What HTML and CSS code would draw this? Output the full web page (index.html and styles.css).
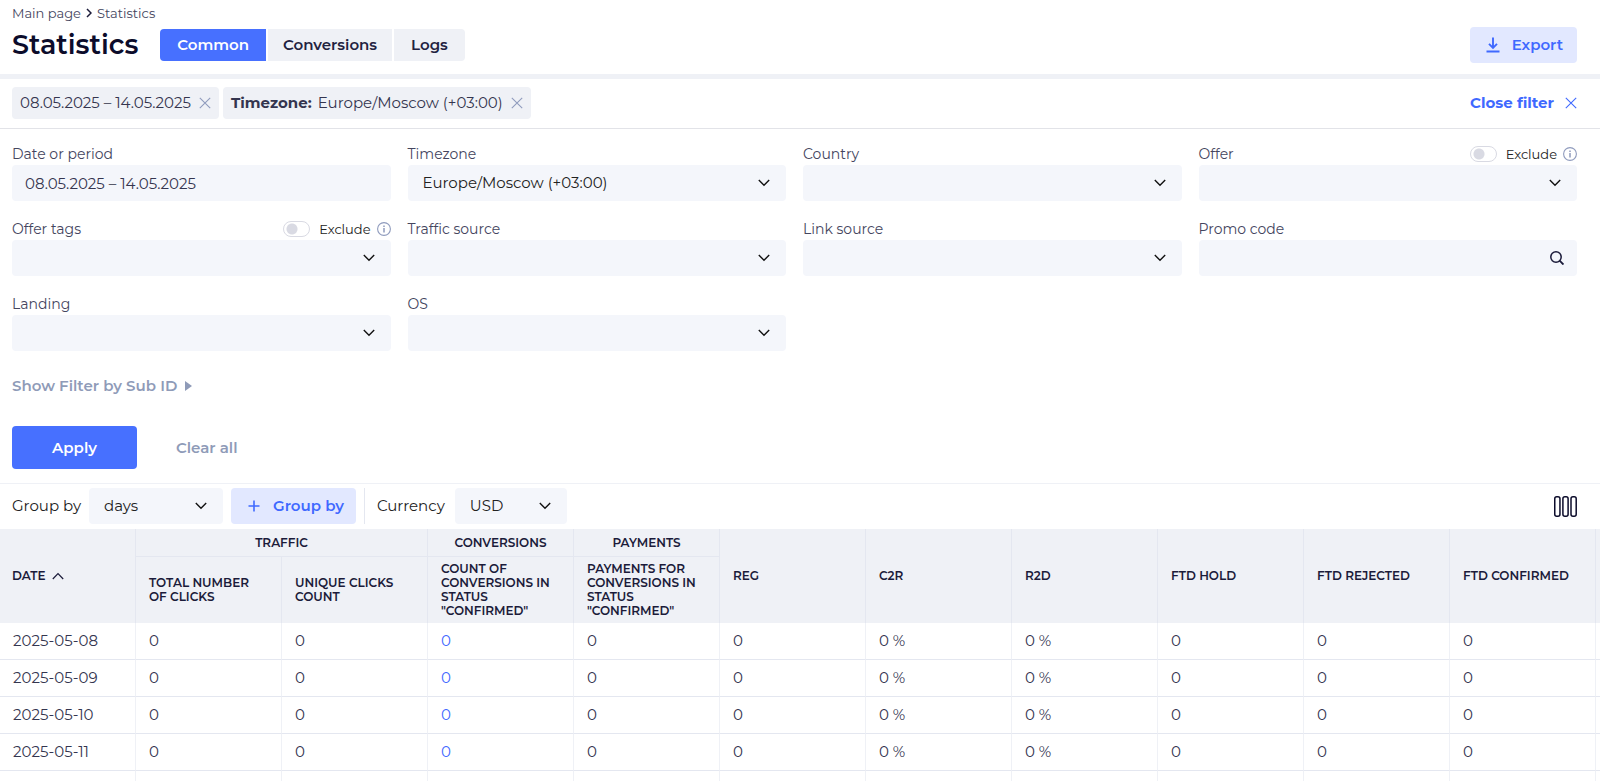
FILE: index.html
```html
<!DOCTYPE html>
<html lang="en">
<head>
<meta charset="utf-8">
<title>Statistics</title>
<meta name="viewport" content="width=device-width, initial-scale=1">
<link rel="stylesheet" href="styles.css">
</head>
<body>
<svg class="sprite" aria-hidden="true">
  <symbol id="chevron" viewBox="0 0 12 8"><path d="M.8 1L6 6.200 11.200 1" fill="none" stroke="currentColor" stroke-width="1.400"/></symbol>
  <symbol id="cross" viewBox="0 0 12 12"><path d="M.8.8l10.4 10.4M11.2.8L.8 11.2" fill="none" stroke="currentColor" stroke-width="1.1"/></symbol>
  <symbol id="info" viewBox="0 0 14 14"><circle cx="7" cy="7" r="6.4" fill="none" stroke="currentColor" stroke-width="1.1"/><path d="M7 6v4.4M7 3.4v1.5" fill="none" stroke="currentColor" stroke-width="1.5"/></symbol>
</svg>
<div class="app">
  <header class="header">
    <nav class="crumbs" aria-label="Breadcrumb">
      <a href="#">Main page</a>
      <svg class="crumb-arrow" viewBox="0 0 6 10"><path d="M1 1l4 4-4 4" fill="none" stroke="currentColor" stroke-width="1.5"/></svg>
      <a href="#">Statistics</a>
    </nav>
    <div class="title-row">
      <h1 class="title">Statistics</h1>
      <nav class="tabs">
        <button class="tab tab-active">Common</button>
        <button class="tab">Conversions</button>
        <button class="tab">Logs</button>
      </nav>
      <button class="soft-button export">
        <svg class="icon-download" viewBox="0 0 14 16"><path d="M7 .5v10M3 6.800L7 10.800l4-4M.5 14.500h13" fill="none" stroke="currentColor" stroke-width="1.900"/></svg>
        Export
      </button>
    </div>
  </header>

  <section class="applied">
    <div class="chip"><span>08.05.2025 – 14.05.2025</span><button class="chip-close" aria-label="Remove period"><svg class="icon-cross"><use href="#cross"/></svg></button></div>
    <div class="chip"><b>Timezone:</b><span>Europe/Moscow (+03:00)</span><button class="chip-close" aria-label="Remove timezone"><svg class="icon-cross"><use href="#cross"/></svg></button></div>
    <button class="close-filter">Close filter <svg class="icon-cross"><use href="#cross"/></svg></button>
  </section>

  <form class="filters">
    <div class="grid">
      <div class="field">
        <div class="field-head"><label for="period">Date or period</label></div>
        <input class="control control-date" id="period" type="text" value="08.05.2025 – 14.05.2025">
      </div>
      <div class="field">
        <div class="field-head"><label for="tz">Timezone</label></div>
        <div class="select"><select class="control" id="tz"><option>Europe/Moscow (+03:00)</option></select><svg class="icon-chevron"><use href="#chevron"/></svg></div>
      </div>
      <div class="field">
        <div class="field-head"><label for="country">Country</label></div>
        <div class="select"><select class="control" id="country"><option></option></select><svg class="icon-chevron"><use href="#chevron"/></svg></div>
      </div>
      <div class="field">
        <div class="field-head"><label for="offer">Offer</label>
          <div class="exclude"><label class="exclude-label"><input class="switch" type="checkbox">Exclude</label><svg class="icon-info"><use href="#info"/></svg></div></div>
        <div class="select"><select class="control" id="offer"><option></option></select><svg class="icon-chevron"><use href="#chevron"/></svg></div>
      </div>
      <div class="field">
        <div class="field-head"><label for="tags">Offer tags</label>
          <div class="exclude"><label class="exclude-label"><input class="switch" type="checkbox">Exclude</label><svg class="icon-info"><use href="#info"/></svg></div></div>
        <div class="select"><select class="control" id="tags"><option></option></select><svg class="icon-chevron"><use href="#chevron"/></svg></div>
      </div>
      <div class="field">
        <div class="field-head"><label for="traffic">Traffic source</label></div>
        <div class="select"><select class="control" id="traffic"><option></option></select><svg class="icon-chevron"><use href="#chevron"/></svg></div>
      </div>
      <div class="field">
        <div class="field-head"><label for="link">Link source</label></div>
        <div class="select"><select class="control" id="link"><option></option></select><svg class="icon-chevron"><use href="#chevron"/></svg></div>
      </div>
      <div class="field">
        <div class="field-head"><label for="promo">Promo code</label></div>
        <div class="select"><input class="control" id="promo" type="text"><svg class="icon-search" viewBox="0 0 14 14"><circle cx="6" cy="6" r="5.200" fill="none" stroke="currentColor" stroke-width="1.500"/><path d="M9.600 9.600l3.900 3.900" stroke="currentColor" stroke-width="1.900"/></svg></div>
      </div>
      <div class="field">
        <div class="field-head"><label for="landing">Landing</label></div>
        <div class="select"><select class="control" id="landing"><option></option></select><svg class="icon-chevron"><use href="#chevron"/></svg></div>
      </div>
      <div class="field">
        <div class="field-head"><label for="os">OS</label></div>
        <div class="select"><select class="control" id="os"><option></option></select><svg class="icon-chevron"><use href="#chevron"/></svg></div>
      </div>
    </div>
    <button class="sub-toggle" type="button">Show Filter by Sub ID <svg class="icon-triangle" viewBox="0 0 7 10"><path d="M0 0l7 5-7 5z" fill="currentColor"/></svg></button>
    <div class="actions">
      <button class="apply" type="button">Apply</button>
      <button class="clear" type="reset">Clear all</button>
    </div>
  </form>

  <section class="toolbar">
    <label for="group">Group by</label>
    <div class="select select-group"><select class="control" id="group"><option>days</option></select><svg class="icon-chevron"><use href="#chevron"/></svg></div>
    <button class="soft-button add-group"><svg class="icon-plus" viewBox="0 0 12 12"><path d="M6 .5v11M.5 6h11" stroke="currentColor" stroke-width="1.600"/></svg>Group by</button>
    <div class="currency">
      <label for="currency">Currency</label>
      <div class="select select-currency"><select class="control" id="currency"><option>USD</option></select><svg class="icon-chevron"><use href="#chevron"/></svg></div>
    </div>
    <button class="columns" aria-label="Columns"><svg class="icon-columns" viewBox="0 0 23 21"><g fill="none" stroke="currentColor" stroke-width="1.500"><rect x=".75" y=".75" width="5.200" height="19.500" rx="2"/><rect x="8.900" y=".75" width="5.200" height="19.500" rx="2"/><rect x="17" y=".75" width="5.200" height="19.500" rx="2"/></g></svg></button>
  </section>

  <div class="table-wrap">
    <table class="table">
      <colgroup><col class="col-date"><col class="col-value" span="10"><col></colgroup>
      <thead>
        <tr class="groups">
          <th rowspan="2" class="date">Date <svg class="icon-sort" viewBox="0 0 12 8"><path d="M.8 7L6 1.500 11.200 7" fill="none" stroke="currentColor" stroke-width="1.200"/></svg></th>
          <th colspan="2" class="group">Traffic</th><th class="group">Conversions</th><th class="group">Payments</th>
          <th rowspan="2">Reg</th><th rowspan="2">C2R</th><th rowspan="2">R2D</th><th rowspan="2">FTD hold</th><th rowspan="2">FTD rejected</th><th rowspan="2">FTD confirmed</th><th rowspan="2" class="rest"></th>
        </tr>
        <tr class="names"><th>Total number of clicks</th><th>Unique clicks count</th><th>Count of conversions in status "confirmed"</th><th>Payments for conversions in status "confirmed"</th></tr>
      </thead>
      <tbody>
        <tr><td>2025-05-08</td><td>0</td><td>0</td><td><a href="#">0</a></td><td>0</td><td>0</td><td>0 %</td><td>0 %</td><td>0</td><td>0</td><td>0</td><td class="rest"></td></tr>
        <tr><td>2025-05-09</td><td>0</td><td>0</td><td><a href="#">0</a></td><td>0</td><td>0</td><td>0 %</td><td>0 %</td><td>0</td><td>0</td><td>0</td><td class="rest"></td></tr>
        <tr><td>2025-05-10</td><td>0</td><td>0</td><td><a href="#">0</a></td><td>0</td><td>0</td><td>0 %</td><td>0 %</td><td>0</td><td>0</td><td>0</td><td class="rest"></td></tr>
        <tr><td>2025-05-11</td><td>0</td><td>0</td><td><a href="#">0</a></td><td>0</td><td>0</td><td>0 %</td><td>0 %</td><td>0</td><td>0</td><td>0</td><td class="rest"></td></tr>
        <tr><td></td><td></td><td></td><td></td><td></td><td></td><td></td><td></td><td></td><td></td><td></td><td class="rest"></td></tr>
      </tbody>
    </table>
  </div>
</div>
</body>
</html>
```
FILE: styles.css
```css
* { box-sizing: border-box; }

body {
  margin: 0;
  background: #fff;
  color: #34354f;
  font-family: Montserrat, Inter, "Open Sans", sans-serif;
  font-size: 15px;
  line-height: 20px;
}

button, input, select {
  font: inherit;
  color: inherit;
  border: 0;
  margin: 0;
  padding: 0;
  background: none;
}

button { white-space: nowrap; }
a { color: inherit; text-decoration: none; }
svg { display: block; flex: none; }
.sprite { position: absolute; width: 0; height: 0; }
.app { position: relative; height: 100vh; overflow: hidden; }

/* Soft shade over the rows cut off by the window */
.app::after {
  content: "";
  position: absolute;
  left: 6%;
  right: 6%;
  bottom: 0;
  height: 10px;
  background: radial-gradient(closest-side at 50% 100%, rgba(0, 0, 0, .03), transparent);
  pointer-events: none;
}

/* Header */
.header {
  padding: 5px 23px 11px 12px;
  border-bottom: 5px solid #eff1f6;
}
.crumbs {
  display: flex;
  align-items: center;
  gap: 5px;
  font-size: 13px;
  line-height: 16px;
  color: #44455e;
}
.crumb-arrow { width: 6px; height: 10px; color: #1b1b3a; }
.title-row {
  display: flex;
  align-items: center;
  margin-top: 6px;
}
.title {
  margin: 0;
  font-size: 27px;
  line-height: 36px;
  font-weight: 600;
  color: #0c0c2b;
}
.tabs { display: flex; gap: 2px; margin-left: 22px; }
.tab {
  height: 32px;
  padding: 0 17px;
  background: #eff1f6;
  color: #22223f;
  font-weight: 600;
}
.tab:nth-child(2) { padding: 0 15px; }
.tab:first-child { border-radius: 4px 0 0 4px; }
.tab:last-child { border-radius: 0 4px 4px 0; }
.tab-active { background: #4770ff; color: #fff; }

.soft-button {
  display: flex;
  align-items: center;
  height: 36px;
  border-radius: 4px;
  background: #e2e8ff;
  color: #3f69ff;
  font-weight: 600;
}
.export { margin-left: auto; padding: 0 14px 0 16px; gap: 12px; }
.icon-download { width: 14px; height: 16px; }

/* Applied filters */
.applied {
  display: flex;
  align-items: center;
  gap: 4px;
  padding: 8px 23px 9px 12px;
  border-bottom: 1px solid #e2e3e8;
}
.chip {
  display: flex;
  align-items: center;
  height: 32px;
  padding: 0 8px;
  border-radius: 4px;
  background: #eff1f6;
}
.chip b { font-weight: 700; margin-right: 6px; }
.chip-close { margin-left: 8px; color: #8f9bbd; }
.icon-cross { width: 12px; height: 12px; }
.close-filter {
  display: flex;
  align-items: center;
  gap: 11px;
  margin-left: auto;
  color: #3f69ff;
  font-weight: 700;
}

/* Filter form */
.filters { padding: 14px 23px 14px 12px; border-bottom: 1px solid #eff1f6; }
.grid {
  display: grid;
  grid-template-columns: repeat(4, 1fr);
  gap: 17px;
}
.field-head {
  display: flex;
  justify-content: space-between;
  align-items: center;
  height: 22px;
  font-size: 14px;
  color: #44455e;
}
.exclude, .exclude-label { display: flex; align-items: center; }
.exclude { gap: 6px; }
.exclude-label { gap: 9px; font-size: 13px; color: #222; }
.icon-info { width: 14px; height: 14px; color: #8f9bbd; }
.switch {
  appearance: none;
  width: 27px;
  height: 16px;
  border: 1px solid #d9dae3;
  border-radius: 8px;
  background: radial-gradient(circle at 8px 7px, #d9dae3 5px, transparent 6px);
}
.control {
  appearance: none;
  display: block;
  width: 100%;
  height: 36px;
  padding: 0 15px;
  border-radius: 4px;
  background: #f4f6fb;
  color: #222;
}
.control-date { padding: 0 13px; color: #34354f; }
.select { position: relative; }
.icon-chevron {
  position: absolute;
  top: 14px;
  right: 16px;
  width: 12px;
  height: 8px;
  color: #111;
  pointer-events: none;
}
.icon-search {
  position: absolute;
  top: 11px;
  right: 13px;
  width: 14px;
  height: 14px;
  color: #1b1b3a;
}
.sub-toggle {
  display: flex;
  align-items: center;
  gap: 8px;
  margin-top: 25px;
  color: #8f9bb8;
  font-weight: 600;
}
.icon-triangle { width: 7px; height: 10px; }
.actions { display: flex; align-items: center; gap: 39px; margin-top: 30px; }
.apply {
  width: 125px;
  height: 43px;
  border-radius: 4px;
  background: #4770ff;
  color: #fff;
  font-weight: 600;
}
.clear { color: #8f9bb8; font-weight: 600; }

/* Table toolbar */
.toolbar {
  display: flex;
  align-items: center;
  gap: 8px;
  padding: 4px 23px 5px 12px;
  color: #222;
}
.select-group { width: 134px; }
.select-currency { width: 112px; }
.add-group { padding: 0 12px 0 17px; gap: 13px; }
.icon-plus { width: 12px; height: 12px; }
.currency {
  display: flex;
  align-items: center;
  gap: 10px;
  height: 36px;
  padding-left: 12px;
  border-left: 1px solid #e4e7f0;
}
.columns { margin-left: auto; color: #0c0c2b; }
.icon-columns { width: 23px; height: 21px; }

/* Table */
.table {
  width: 100%;
  table-layout: fixed;
  border-collapse: separate;
  border-spacing: 0;
}
.col-date { width: 136px; }
.col-value { width: 146px; }
.table th, .table td {
  padding: 0 13px;
  text-align: left;
  border-right: 1px solid #e4e7f0;
}
.table th {
  background: #eff1f6;
  color: #1b1b3a;
  font-size: 12px;
  line-height: 14px;
  font-weight: 600;
  text-transform: uppercase;
}
.table td { height: 37px; border-right-color: #eff1f6; border-bottom: 1px solid #e4e7f0; }
.table .date { padding-left: 12px; }
.table .rest { padding: 0; border-right: 0; }
.groups { height: 28px; }
.names { height: 66px; }
.table .group { text-align: center; border-bottom: 1px solid #e4e7f0; }
.icon-sort { display: inline-block; width: 12px; height: 8px; margin-left: 3px; }
.table a { color: #3f69ff; }
```
